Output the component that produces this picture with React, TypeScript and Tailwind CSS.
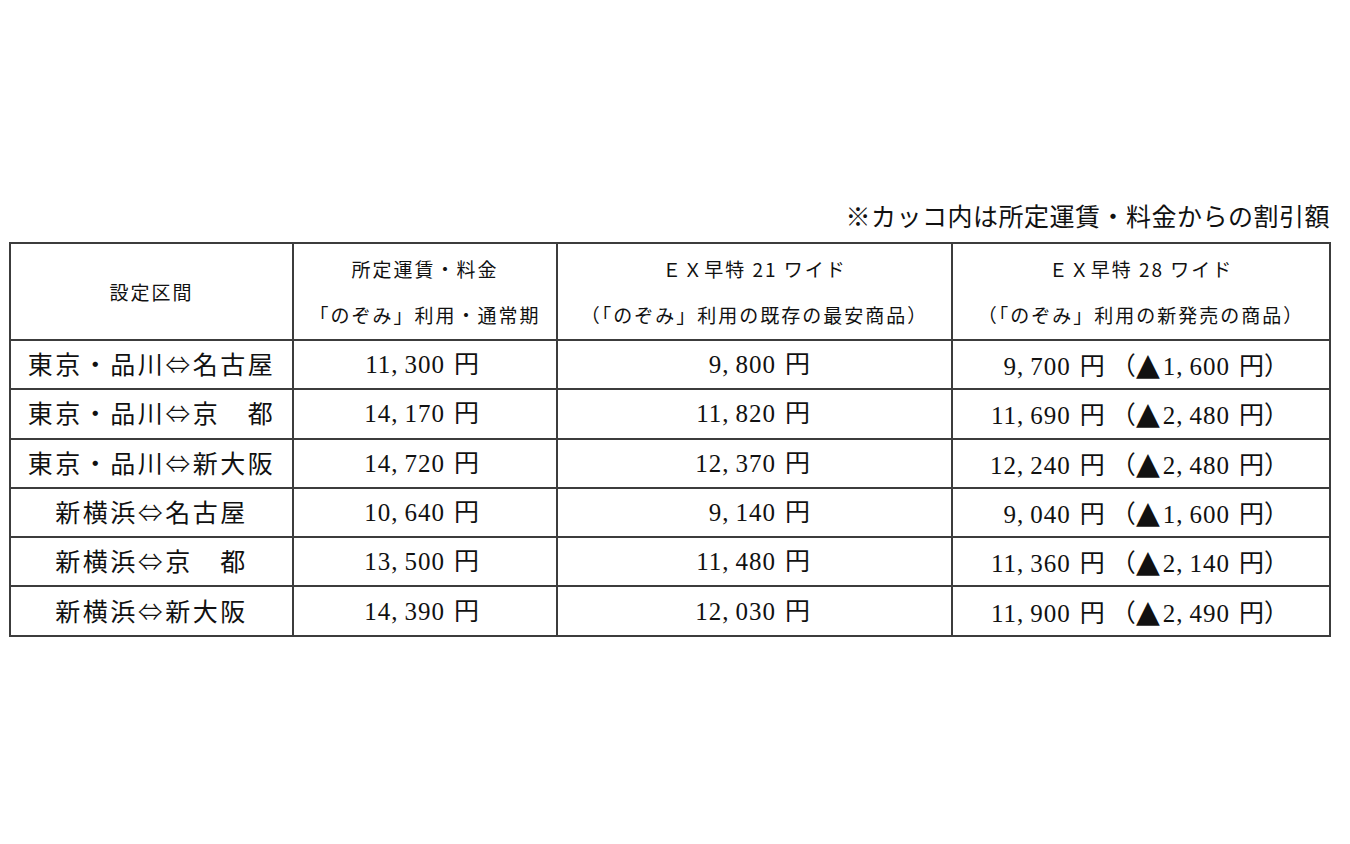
import React from "react";

const font = {
  fontFamily: '"Liberation Serif", "Noto Sans CJK JP", serif',
};

interface Row {
  route: string[];
  base: string;
  ex21: string;
  ex28: string;
  diff: string;
}

const rows: Row[] = [
  { route: ["東京・品川", "名古屋"], base: "11,300", ex21: "9,800", ex28: "9,700", diff: "1,600" },
  { route: ["東京・品川", "京　都"], base: "14,170", ex21: "11,820", ex28: "11,690", diff: "2,480" },
  { route: ["東京・品川", "新大阪"], base: "14,720", ex21: "12,370", ex28: "12,240", diff: "2,480" },
  { route: ["新横浜", "名古屋"], base: "10,640", ex21: "9,140", ex28: "9,040", diff: "1,600" },
  { route: ["新横浜", "京　都"], base: "13,500", ex21: "11,480", ex28: "11,360", diff: "2,140" },
  { route: ["新横浜", "新大阪"], base: "14,390", ex21: "12,030", ex28: "11,900", diff: "2,490" },
];

const cell = "border-2 border-[#3c3c3c]";
const head = `${cell} font-normal text-[19px] tracking-[2px] leading-[46px] font-['Noto_Sans_CJK_JP',sans-serif]`;

// digits with a half-width comma gap and a space before 円, like the Mincho original
function Yen({ v }: { v: string }) {
  const [a, b] = v.split(",");
  return (
    <span className="tracking-[1px]">
      {a}
      <span className="mr-[6px]">,</span>
      {b}
      <span className="ml-[9px] tracking-normal">円</span>
    </span>
  );
}

export default function App() {
  return (
    <div className="w-[1350px] h-[844px] bg-white text-[#111]" style={font}>
      <div className="pt-[202px] pl-[9px]">
        <div className="w-[1321px] text-right text-[25px] leading-[32px] tracking-[0.5px] -mr-[3px] pb-[8px]">
          ※カッコ内は所定運賃・料金からの割引額
        </div>
        <table className="border-collapse w-[1320px] table-fixed">
          <colgroup>
            <col className="w-[283px]" />
            <col className="w-[264px]" />
            <col className="w-[395px]" />
            <col className="w-[378px]" />
          </colgroup>
          <thead>
            <tr className="h-[97px]">
              <th className={head}>設定区間</th>
              <th className={head}>
                <div>所定運賃・料金</div>
                <div>「のぞみ」利用・通常期</div>
              </th>
              <th className={head}>
                <div>ＥＸ早特 21 ワイド</div>
                <div>（「のぞみ」利用の既存の最安商品）</div>
              </th>
              <th className={head}>
                <div>ＥＸ早特 28 ワイド</div>
                <div>（「のぞみ」利用の新発売の商品）</div>
              </th>
            </tr>
          </thead>
          <tbody>
            {rows.map((r) => (
              <tr key={r.route.join()} className="h-[49.3px] text-[25px] leading-none">
                <td className={`${cell} text-center tracking-[2.5px]`}>
                  {r.route[0]}
                  <span className="font-['Noto_Sans_CJK_JP'] font-light">⇔</span>
                  {r.route[1]}
                </td>
                <td className={`${cell} text-right pr-[77px]`}>
                  <Yen v={r.base} />
                </td>
                <td className={`${cell} text-right pr-[141px]`}>
                  <Yen v={r.ex21} />
                </td>
                <td className={`${cell} text-right pr-[40px]`}>
                  <Yen v={r.ex28} />
                  <span className="ml-[6px]">（</span>
                  <span className="font-['DejaVu_Sans'] text-[31px] mr-[3px]">▲</span>
                  <Yen v={r.diff} />
                  <span>）</span>
                </td>
              </tr>
            ))}
          </tbody>
        </table>
      </div>
    </div>
  );
}
